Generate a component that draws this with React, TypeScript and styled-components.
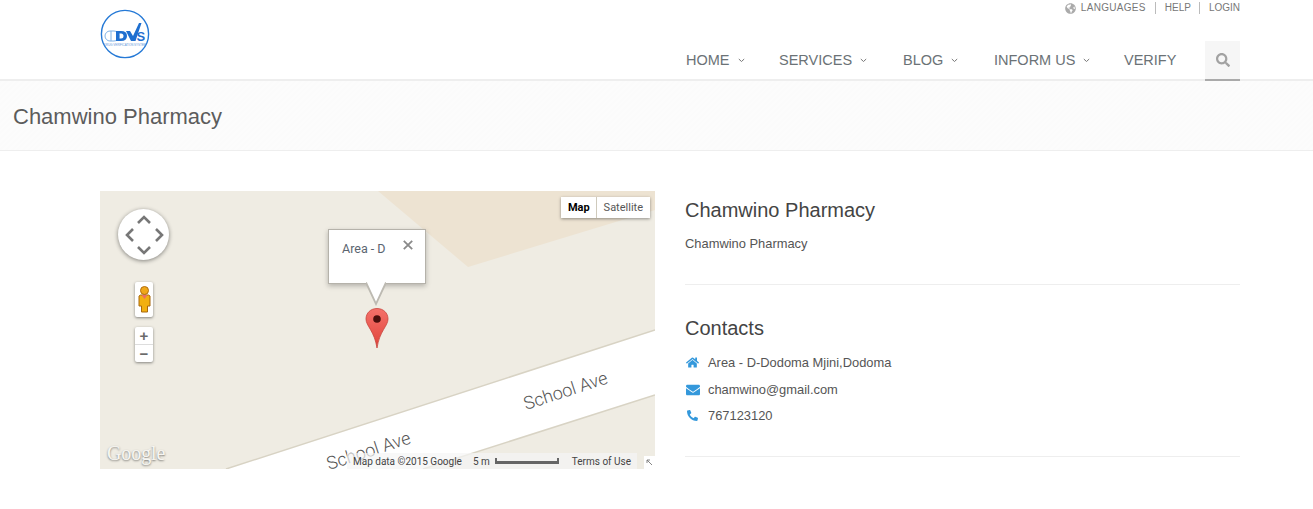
import React from "react";
import styled, { createGlobalStyle } from "styled-components";
import { FaGlobeAmericas, FaSearch, FaHome, FaEnvelope, FaPhone } from "react-icons/fa";

const Global = createGlobalStyle`
  html, body { margin: 0; padding: 0; background: #fff; }
  body { font-family: "Liberation Sans", Arial, sans-serif; color: #555; overflow: hidden; }
`;

const Page = styled.div`
  width: 1313px;
  height: 509px;
  overflow: hidden;
  display: flex;
  flex-direction: column;
`;

const Header = styled.header`
  height: 79px;
  flex: none;
  border-bottom: 2px solid #eeeeee;
  padding: 0 73px 0 100px;
  display: flex;
  justify-content: space-between;
`;

const LogoBox = styled.div`
  width: 50px;
  height: 50px;
  margin-top: 9px;
`;

const HeaderRight = styled.div`
  display: flex;
  flex-direction: column;
  align-items: flex-end;
`;

const TopLinks = styled.ul`
  list-style: none;
  margin: 0;
  padding: 2px 0 0;
  height: 41px;
  flex: none;
  display: flex;
  align-items: flex-start;
  box-sizing: border-box;
`;

const TopLink = styled.li<{ $first?: boolean }>`
  font-size: 10px;
  letter-spacing: ${(p) => (p.$first ? "0.3px" : "0")};
  line-height: 12px;
  height: 12px;
  color: #777;
  padding: 0 ${(p) => (p.$first ? 9 : 8)}px 0 9px;
  border-left: ${(p) => (p.$first ? "none" : "1px solid #bbb")};
  display: flex;
  align-items: center;
  gap: 5px;
  &:last-child { padding-right: 0; }
`;

const Nav = styled.nav`
  display: flex;
  align-items: flex-start;
  flex: none;
`;

const NavItem = styled.a<{ $w: number }>`
  width: ${(p) => p.$w}px;
  height: 38px;
  font-size: 14.5px;
  line-height: 37px;
  color: #6b7276;
  display: flex;
  align-items: center;
  gap: 8px;
  flex: none;
`;

const Caret = styled.svg`
  width: 7px;
  height: 5px;
  flex: none;
  margin-top: 1px;
`;

const SearchBtn = styled.div`
  width: 35px;
  height: 38px;
  background: #f6f6f6;
  border-bottom: 2px solid #aaa;
  display: flex;
  align-items: center;
  justify-content: center;
  color: #a2a2a2;
  font-size: 14px;
`;

const TitleBar = styled.div`
  height: 69px;
  flex: none;
  background: repeating-linear-gradient(135deg, #fbfbfb, #fbfbfb 2px, #fcfcfc 2px, #fcfcfc 4px);
  border-bottom: 1px solid #eeeeee;
  padding-left: 13px;
  display: flex;
  align-items: center;
`;

const PageTitle = styled.h1`
  margin: 2px 0 0;
  font-weight: 400;
  font-size: 22px;
  color: #5c5c5c;
`;

const Content = styled.main`
  padding: 40px 73px 0 100px;
  display: grid;
  grid-template-columns: 555px 555px;
  column-gap: 30px;
`;

const MapCanvas = styled.div`
  position: relative;
  width: 555px;
  height: 278px;
  overflow: hidden;
  background: #efece3;
`;

const MapBase = styled.svg`
  position: absolute;
  inset: 0;
`;

const MapType = styled.div`
  position: absolute;
  top: 6px;
  right: 5px;
  display: flex;
  height: 21px;
  background: #fff;
  box-shadow: 0 1px 3px rgba(0, 0, 0, 0.4);
  font-family: Roboto, sans-serif;
  font-size: 11px;
  line-height: 21px;
`;

const MapTypeBtn = styled.div<{ $active?: boolean }>`
  padding: 0 7px;
  padding-right: ${(p) => (p.$active ? 6 : 7)}px;
  color: ${(p) => (p.$active ? "#000" : "#565656")};
  font-weight: ${(p) => (p.$active ? 700 : 400)};
  border-left: ${(p) => (p.$active ? "none" : "1px solid #cfcabc")};
`;

const Pan = styled.svg`
  position: absolute;
  left: 18px;
  top: 18px;
  filter: drop-shadow(0 1px 2px rgba(0, 0, 0, 0.45));
`;

const Pegman = styled.div`
  position: absolute;
  left: 35px;
  top: 91px;
  width: 18px;
  height: 35px;
  background: #fff;
  border-radius: 2px;
  box-shadow: 0 1px 3px rgba(0, 0, 0, 0.45);
  display: flex;
  align-items: center;
  justify-content: center;
`;

const Zoom = styled.div`
  position: absolute;
  left: 35px;
  top: 136px;
  width: 18px;
  height: 35px;
  background: #fff;
  border-radius: 2px;
  box-shadow: 0 1px 3px rgba(0, 0, 0, 0.45);
  display: flex;
  flex-direction: column;
  font-family: "Liberation Sans", sans-serif;
  color: #6a6a6a;
`;

const ZoomBtn = styled.div<{ $minus?: boolean }>`
  flex: 1;
  display: flex;
  align-items: center;
  justify-content: center;
  font-size: 15px;
  font-weight: 700;
  line-height: 1;
  border-top: ${(p) => (p.$minus ? "1px solid #ddd" : "none")};
`;

const Bubble = styled.div`
  position: absolute;
  left: 228px;
  top: 38px;
  width: 96px;
  height: 53px;
  background: #fff;
  border: 1px solid #b5b2aa;
  box-shadow: 0 2px 5px rgba(0, 0, 0, 0.25);
  font-family: Roboto, sans-serif;
  font-size: 12.5px;
  color: #5b6570;
`;

const BubbleText = styled.div`
  padding: 12px 0 0 13px;
  line-height: 14px;
`;

const BubbleClose = styled.svg`
  position: absolute;
  top: 10px;
  right: 12px;
`;

const BubbleTail = styled.svg`
  position: absolute;
  left: 266px;
  top: 91px;
`;

const Marker = styled.svg`
  position: absolute;
  left: 265px;
  top: 117px;
`;

const GoogleMark = styled.div`
  position: absolute;
  left: 7px;
  bottom: 5px;
  font-family: "Liberation Serif", serif;
  font-size: 20px;
  line-height: 22px;
  letter-spacing: -0.1px;
  color: #f7f6f2;
  text-shadow: 0 1px 2px rgba(0, 0, 0, 0.5);
`;

const Attribution = styled.div`
  position: absolute;
  left: 247px;
  bottom: 0;
  height: 16px;
  width: 290px;
  background: rgba(245, 245, 245, 0.7);
  display: flex;
  align-items: center;
  font-family: Roboto, sans-serif;
  font-size: 10px;
  color: #444;
  white-space: nowrap;
  padding-left: 6px;
  box-sizing: border-box;
`;

const ScaleLabel = styled.span`
  margin-left: 11px;
`;

const ScaleBar = styled.span`
  display: inline-block;
  width: 64px;
  height: 6px;
  margin: 0 13px 0 5px;
  border: solid #666;
  border-width: 0 2px 3px 2px;
  box-sizing: border-box;
`;

const Corner = styled.div`
  position: absolute;
  right: 0;
  bottom: 0;
  width: 11px;
  height: 13px;
  background: #fff;
  display: flex;
  align-items: center;
  justify-content: center;
`;

const Side = styled.section`
  display: flex;
  flex-direction: column;
`;

const SideHeading = styled.h3`
  margin: 0;
  font-weight: 400;
  font-size: 20px;
  line-height: 24px;
  color: #444;
`;

const Intro = styled.div`
  padding-top: 7px;
  height: 94px;
  box-sizing: border-box;
  border-bottom: 1px solid #eeeeee;
`;

const Para = styled.p`
  margin: 13px 0 0;
  font-size: 12.9px;
  line-height: 18px;
  color: #555;
`;

const Contacts = styled.div`
  padding-top: 31px;
  height: 172px;
  box-sizing: border-box;
  border-bottom: 1px solid #eeeeee;
`;

const ContactList = styled.ul`
  list-style: none;
  margin: 9px 0 0;
  padding: 0;
`;

const ContactRow = styled.li<{ $h: number }>`
  height: ${(p) => p.$h}px;
  display: flex;
  align-items: center;
  font-size: 12.9px;
  color: #555;
`;

const ContactIcon = styled.span<{ $size: number; $indent?: number }>`
  width: ${(p) => 23 - (p.$indent ?? 0)}px;
  margin-left: ${(p) => p.$indent ?? 0}px;
  flex: none;
  display: flex;
  color: #3498db;
  font-size: ${(p) => p.$size}px;
`;

const Dropper = () => (
  <svg width="13" height="27" viewBox="0 0 13 27">
    <circle cx="6.5" cy="4.500" r="4" fill="#f0a818" stroke="#b06d10" />
    <path d="M2.500 9h8l1.500 1v10H9.500v6h-6v-6H1V10z" fill="#f2b010" stroke="#a8680e" />
    <path d="M3.500 9h6L6.500 13z" fill="#ec7060" />
  </svg>
);

const Logo = () => (
  <svg width="50" height="50" viewBox="0 0 50 50">
    <circle cx="25" cy="25" r="23.6" fill="#fff" stroke="#2579d6" strokeWidth="1.4" />
    <rect x="5" y="22" width="14" height="10" rx="5" fill="#fff" stroke="#80b2e6" strokeWidth="1" />
    <path d="M11 22v10" stroke="#80b2e6" />
    <path d="M16 22h5q6 0 6 5t-6 5h-5zM19.500 24.500v5h1.500q2.500 0 2.500-2.500t-2.500-2.500z" fill="#1f6fd0" fillRule="evenodd" />
    <path d="M26 22h4l3 5 6-13h2.500l-6 18h-4.500z" fill="#1f6fd0" />
    <text x="36.500" y="32" fontFamily="Liberation Sans, sans-serif" fontWeight="700" fontSize="13" fill="#1f6fd0">S</text>
    <text x="25" y="37" textAnchor="middle" fontFamily="Liberation Sans, sans-serif" fontSize="2.900" fill="#5a94d8">DRUG VERIFICATION SYSTEM</text>
  </svg>
);

const Chevron = () => (
  <Caret viewBox="0 0 7 5">
    <path d="M.8 1 3.500 3.500 6.200 1" fill="none" stroke="#777" strokeWidth="1" />
  </Caret>
);

const nav: { label: string; w: number; caret: boolean }[] = [
  { label: "HOME", w: 93, caret: true },
  { label: "SERVICES", w: 124, caret: true },
  { label: "BLOG", w: 91, caret: true },
  { label: "INFORM US", w: 130, caret: true },
  { label: "VERIFY", w: 81, caret: false },
];

export default function App() {
  return (
    <Page>
      <Global />
      <Header>
        <LogoBox>
          <Logo />
        </LogoBox>
        <HeaderRight>
          <TopLinks>
            <TopLink $first>
              <FaGlobeAmericas size={11} color="#aaa" />
              LANGUAGES
            </TopLink>
            <TopLink>HELP</TopLink>
            <TopLink>LOGIN</TopLink>
          </TopLinks>
          <Nav>
            {nav.map((n) => (
              <NavItem key={n.label} $w={n.w}>
                {n.label}
                {n.caret && <Chevron />}
              </NavItem>
            ))}
            <SearchBtn>
              <FaSearch />
            </SearchBtn>
          </Nav>
        </HeaderRight>
      </Header>
      <TitleBar>
        <PageTitle>Chamwino Pharmacy</PageTitle>
      </TitleBar>
      <Content>
        <MapCanvas>
          <MapBase width="555" height="278" viewBox="0 0 555 278">
            <defs>
              <linearGradient id="pin" x1="0" y1="0" x2="0" y2="1">
                <stop offset="0" stopColor="#f4716a" />
                <stop offset="1" stopColor="#e0433a" />
              </linearGradient>
            </defs>
            <polygon points="278,0 555,0 555,19 368,76" fill="#ede3d2" />
            <polygon points="126,278 555,139 555,204 323,278" fill="#fff" />
            <path d="M126 278 555 139M323 278 555 204" stroke="#d8d3c4" strokeWidth="1.500" fill="none" />
            <text x="0" y="0" transform="translate(426 219) rotate(-18)" fontFamily="Roboto, sans-serif" fontWeight="300" fontSize="18" fill="#555">School Ave</text>
            <text x="0" y="0" transform="translate(229 279) rotate(-18)" fontFamily="Roboto, sans-serif" fontWeight="300" fontSize="18" fill="#555">School Ave</text>
          </MapBase>
          <MapType>
            <MapTypeBtn $active>Map</MapTypeBtn>
            <MapTypeBtn>Satellite</MapTypeBtn>
          </MapType>
          <Pan width="52" height="52" viewBox="0 0 52 52">
            <circle cx="25.500" cy="25.500" r="25.500" fill="#fff" />
            <path d="M20 14 26 8 32 14M20 38 26 44 32 38M15 20 9 26 15 32M38 20 44 26 38 32" fill="none" stroke="#777" strokeWidth="2.600" />
          </Pan>
          <Pegman>
            <Dropper />
          </Pegman>
          <Zoom>
            <ZoomBtn>+</ZoomBtn>
            <ZoomBtn $minus>−</ZoomBtn>
          </Zoom>
          <Bubble>
            <BubbleText>Area - D</BubbleText>
            <BubbleClose width="10" height="10" viewBox="0 0 10 10">
              <path d="M.8.8l8.400 8.400M9.200.8.800 9.200" stroke="#8a8a8a" strokeWidth="1.800" />
            </BubbleClose>
          </Bubble>
          <BubbleTail width="20" height="24" viewBox="0 0 20 24">
            <polygon points="0,0 20,0 10,22" fill="#fff" />
            <path d="M0 0.500 10 22 20 0.500" fill="none" stroke="#bdbab2" strokeWidth="1.800" />
          </BubbleTail>
          <Marker width="24" height="41" viewBox="0 0 24 41">
            <path d="M12 .5C5.600.5 1 5 1 11c0 7 8.500 12 11 29 2.500-17 11-22 11-29C23 5 18.400.5 12 .5z" fill="url(#pin)" stroke="#c8443c" strokeWidth="0.800" />
            <circle cx="12" cy="11" r="3.800" fill="#4a0f0c" />
          </Marker>
          <GoogleMark>Google</GoogleMark>
          <Attribution>
            Map data ©2015 Google
            <ScaleLabel>5 m</ScaleLabel>
            <ScaleBar />
            Terms of Use
          </Attribution>
          <Corner>
            <svg width="7" height="7" viewBox="0 0 7 7">
              <path d="M1 4V1h3M1 1l5 5" fill="none" stroke="#777" strokeWidth="0.900" />
            </svg>
          </Corner>
        </MapCanvas>
        <Side>
          <Intro>
            <SideHeading>Chamwino Pharmacy</SideHeading>
            <Para>Chamwino Pharmacy</Para>
          </Intro>
          <Contacts>
            <SideHeading>Contacts</SideHeading>
            <ContactList>
              <ContactRow $h={27}>
                <ContactIcon $size={13} $indent={1}><FaHome /></ContactIcon>
                Area - D-Dodoma Mjini,Dodoma
              </ContactRow>
              <ContactRow $h={27}>
                <ContactIcon $size={14} $indent={1}><FaEnvelope /></ContactIcon>
                chamwino@gmail.com
              </ContactRow>
              <ContactRow $h={25}>
                <ContactIcon $size={11} $indent={2}><FaPhone style={{ transform: "scaleX(-1)" }} /></ContactIcon>
                767123120
              </ContactRow>
            </ContactList>
          </Contacts>
        </Side>
      </Content>
    </Page>
  );
}
